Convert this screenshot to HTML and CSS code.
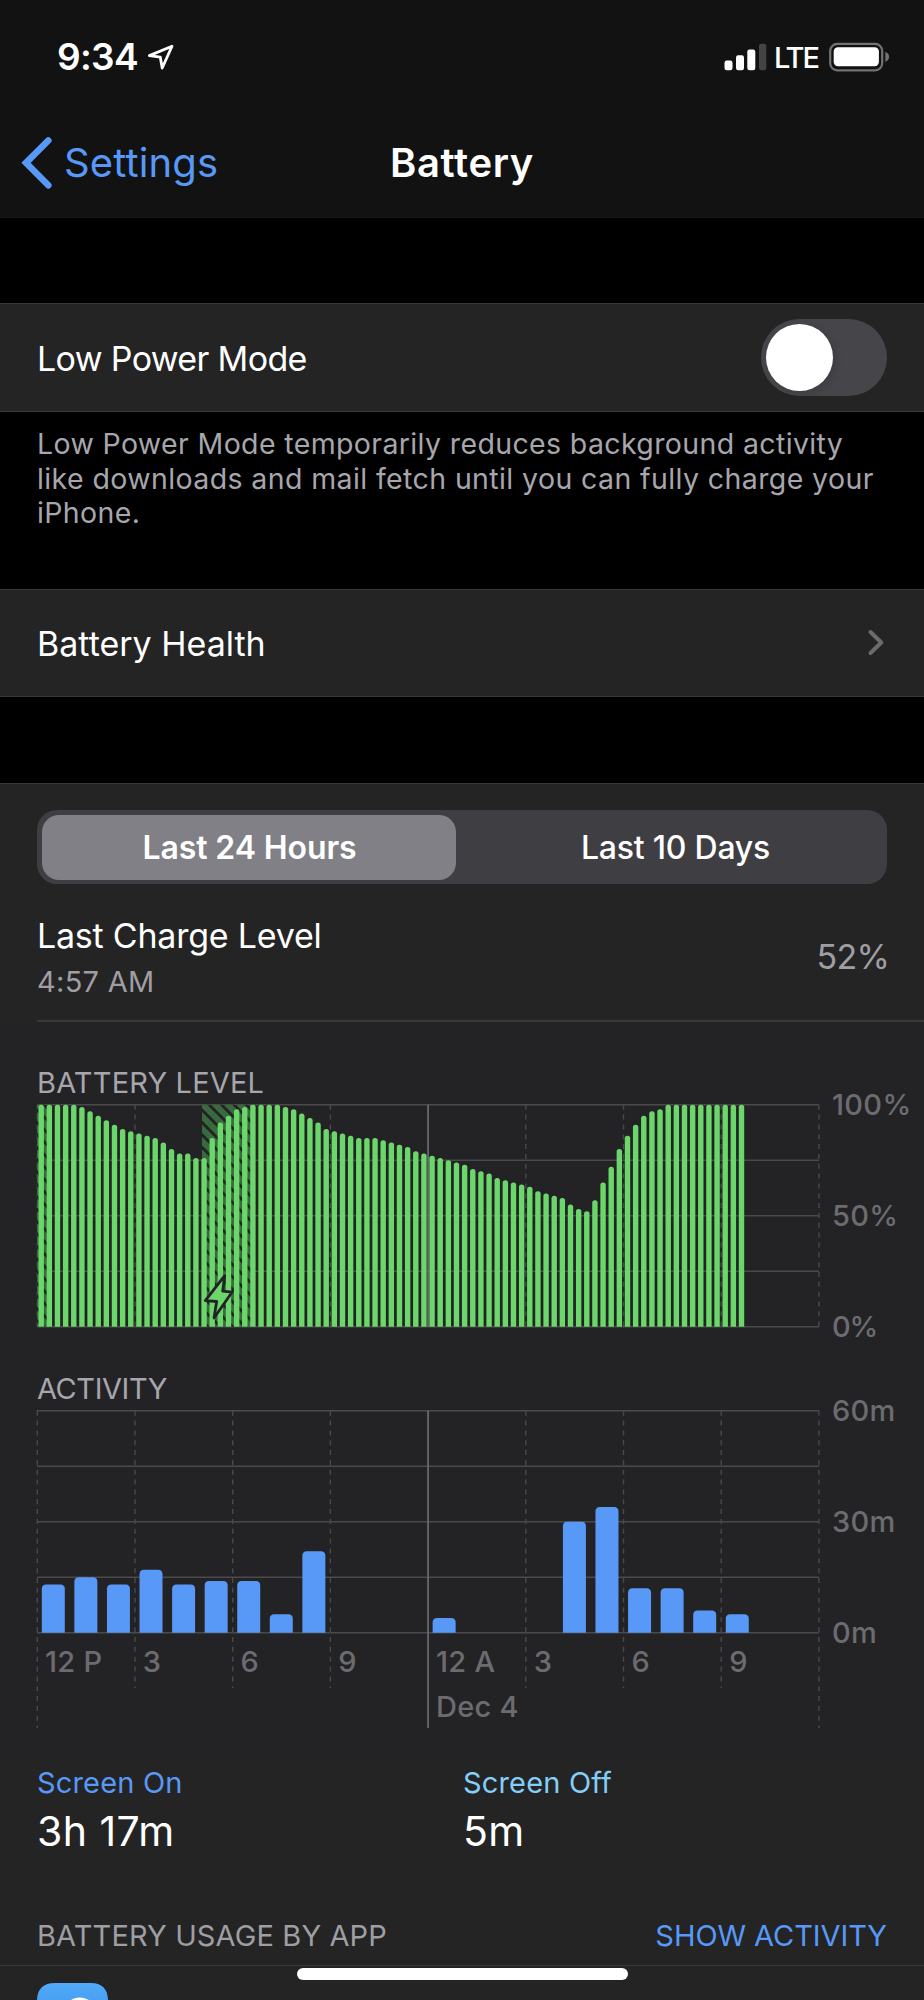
FILE: index.html
```html
<!DOCTYPE html>
<html lang="en">
<head>
<meta charset="utf-8">
<title>Battery</title>
<link rel="stylesheet" href="styles.css">
</head>
<body>
<main class="phone">
  <header class="top">
    <div class="status">
      <span class="clock">9:34</span>
      <svg class="location" width="28" height="28" viewBox="0 0 28 28"><path d="M25 3.2 2.4 12.6 13.3 14.2 15.2 25z"/></svg>
      <svg class="signal" width="43" height="28" viewBox="0 0 43 28">
        <rect x="0.5" y="17.5" width="8" height="9.8" rx="2.2"/>
        <rect x="12" y="12.3" width="8" height="15" rx="2.2"/>
        <rect x="23.3" y="6.5" width="8" height="20.8" rx="2.2"/>
        <rect class="off" x="35" y="0.7" width="7.3" height="26.6" rx="2.2"/>
      </svg>
      <span class="carrier">LTE</span>
      <svg class="cell" width="62" height="30" viewBox="0 0 62 30">
        <rect class="shell" x="2.2" y="1.9" width="52" height="26.4" rx="7"/>
        <rect class="charge" x="5.7" y="5.3" width="45.2" height="19" rx="4.2"/>
        <path class="tip" d="M57.3 9.8c5 1.8 5 8.4 0 10.2z"/>
      </svg>
    </div>
    <nav class="nav">
      <a class="back"><svg width="32" height="54" viewBox="0 0 32 54"><path d="M28.300 4.5 6 26.800 28.300 49.300"/></svg><span>Settings</span></a>
      <h1 class="title">Battery</h1>
    </nav>
  </header>

  <section class="row row-power">
    <span class="label power-label">Low Power Mode</span>
    <span class="switch"><span class="knob"></span></span>
  </section>
  <p class="note">Low Power Mode temporarily reduces background activity<br><span class="note-wide">like downloads and mail fetch until you can fully charge your</span><br>iPhone.</p>

  <section class="row row-health">
    <span class="label">Battery Health</span>
    <svg class="chevron" width="20" height="30" viewBox="0 0 20 30"><path d="M3.500 4 14.300 14.500 3.500 25"/></svg>
  </section>

  <section class="usage">
    <div class="segments">
      <span class="segment active">Last 24 Hours</span>
      <span class="segment">Last 10 Days</span>
    </div>
    <div class="charge-row">
      <div class="charge-text">
        <span class="label charge-label">Last Charge Level</span>
        <span class="time">4:57 AM</span>
      </div>
      <span class="percent">52%</span>
    </div>

    <div class="charts">
      <h2 class="caption">BATTERY LEVEL</h2>
      <div class="chart">
        <svg id="level" class="plot" width="784" height="224" viewBox="0 0 784 224"></svg>
        <div class="scale"><span>100%</span><span>50%</span><span class="zero">0%</span></div>
      </div>
      <h2 class="caption caption-activity">ACTIVITY</h2>
      <div class="chart">
        <svg id="activity" class="plot" width="784" height="224" viewBox="0 0 784 224"></svg>
        <div class="scale"><span>60m</span><span>30m</span><span>0m</span></div>
      </div>
      <div class="hours">
        <span>12 P</span><span>3</span><span>6</span><span>9</span><span>12 A<br>Dec 4</span><span>3</span><span>6</span><span>9</span>
      </div>
    </div>

    <div class="totals">
      <div><div class="kind on">Screen On</div><div class="amount">3h 17m</div></div>
      <div><div class="kind off">Screen Off</div><div class="amount">5m</div></div>
    </div>
    <div class="apps-head"><span>BATTERY USAGE BY APP</span><a class="show">SHOW ACTIVITY</a></div>
    <div class="apps">
      <svg class="app-icon" width="72" height="18" viewBox="0 0 72 18">
        <defs><linearGradient id="sky" x1="0" y1="0" x2="0" y2="1"><stop offset="0" stop-color="#50aaf9"/><stop offset="1" stop-color="#4a9ff3"/></linearGradient></defs>
        <path fill="url(#sky)" d="M0 18C0 6 6 0 18 0H54C65 0 71 6 71 18z"/>
        <path fill="#fff" d="M33 18C37 13.200 48 13.200 53 18z"/>
      </svg>
    </div>
  </section>
  <div class="home"></div>
</main>
<script src="charts.js"></script>
</body>
</html>
```
FILE: styles.css
```css
* { box-sizing: border-box; }
body { margin: 0; background: #000; }
.phone {
  position: relative;
  width: 924px;
  height: 2000px;
  overflow: hidden;
  background: #000;
  color: #fff;
  font-family: "Inter", "Liberation Sans", sans-serif;
}
svg { display: block; flex: none; overflow: visible; }
.top {
  height: 218px;
  padding-top: 42px;
  background: #121212;
  border-bottom: 1px solid #191919;
}
.status { display: flex; align-items: center; height: 30px; padding-left: 57px; }
.clock { width: 90px; font-size: 37px; font-weight: 600; line-height: 30px; letter-spacing: -0.67px; }
.location { fill: none; stroke: #fff; stroke-width: 2.8; stroke-linejoin: round; }
.signal { margin-left: 549px; fill: #fff; }
.signal .off { fill: #444; }
.carrier { width: 55px; padding: 2px 0 0 7px; font-size: 29px; font-weight: 500; line-height: 30px; letter-spacing: -2.1px; }
.cell { margin-left: 6px; }
.shell { fill: none; stroke: #727272; stroke-width: 2.2; }
.charge { fill: #fff; }
.tip { fill: #727272; }
.nav { display: grid; grid-template-columns: 1fr auto 1fr; align-items: center; margin-top: 61px; height: 60px; padding: 0 20px; }
.back { display: flex; align-items: center; color: #5899f8; font-size: 40px; letter-spacing: 0.14px; line-height: 48px; }
.back svg { margin-right: 12px; fill: none; stroke: #5899f8; stroke-width: 6.6; stroke-linecap: round; stroke-linejoin: miter; }
.title { margin: 0; font-size: 40px; font-weight: 600; letter-spacing: 0.6px; line-height: 48px; }

.row {
  display: flex;
  align-items: center;
  justify-content: space-between;
  padding: 0 37px;
  background: #242424;
  border: solid #3a3a3b;
  border-width: 1px 0;
}
.row-power { height: 109px; margin-top: 85px; }
.row-health { height: 108px; }
.label { font-size: 34px; line-height: 42px; }
.row .label { padding-top: 2px; }
.power-label { letter-spacing: -0.65px; }
.switch { width: 126px; height: 77px; padding: 5px; border-radius: 39px; background: #464549; }
.knob { display: block; width: 67px; height: 67px; border-radius: 50%; background: #fff; box-shadow: 3px 3px 9px rgba(0, 0, 0, 0.12); }
.note {
  height: 177px;
  margin: 0;
  padding: 15px 37px 0;
  color: #a7a6ad;
  font-size: 28.5px;
  line-height: 34.6px;
  letter-spacing: 0.37px;
  white-space: nowrap;
}
.note-wide { letter-spacing: 0.395px; }
.chevron { fill: none; stroke: #6b6b6f; stroke-width: 4; stroke-linecap: round; stroke-linejoin: round; }

.usage { height: 1217px; margin-top: 86px; background: #242424; border-top: 1px solid #3a3a3b; }
.segments {
  display: grid;
  grid-template-columns: 414px 1fr;
  height: 74px;
  margin: 26px 37px 0;
  padding: 5px;
  border-radius: 20px;
  background: #3f3e43;
}
.segment { padding-left: 13px; font-size: 32px; font-weight: 500; line-height: 65px; text-align: center; letter-spacing: -0.23px; }
.segment.active { padding-left: 1px; border-radius: 17px; background: #808086; font-weight: 600; letter-spacing: -0.11px; }
.charge-row {
  display: flex;
  align-items: center;
  justify-content: space-between;
  height: 138px;
  margin-left: 37px;
  padding-right: 35px;
  border-bottom: 2px solid #38383a;
}
.charge-text { display: flex; flex-direction: column; margin-top: 10px; }
.charge-label { letter-spacing: -0.225px; }
.time { margin-top: 7px; color: #9f9ea3; font-size: 29px; line-height: 36px; letter-spacing: 0.28px; }
.percent { margin-top: 10px; color: #9f9ea3; font-size: 34px; line-height: 42px; letter-spacing: -0.8px; }

.charts { height: 738px; padding: 43px 0 0 37px; background: #232325; }
.caption { margin: 0; color: #a7a6ad; font-size: 29px; font-weight: 400; line-height: 36px; letter-spacing: 0.17px; }
.caption-activity { margin-top: 43px; letter-spacing: -0.42px; }
.chart { display: flex; margin-top: 3px; height: 224px; }
.scale {
  display: flex;
  flex-direction: column;
  justify-content: space-between;
  height: 252px;
  margin: -14px 0 0 11px;
  color: #6c6c70;
  font-size: 29px;
  font-weight: 500;
  line-height: 30px;
  letter-spacing: 0.3px;
}
.zero { letter-spacing: -1.2px; }
.hours {
  display: grid;
  grid-template-columns: repeat(8, 97.75px);
  margin-top: 5px;
  color: #6c6c70;
  font-size: 29px;
  font-weight: 500;
  line-height: 45px;
  letter-spacing: 0.25px;
  white-space: nowrap;
}
.hours span { padding-left: 8px; }
.plot .grid { stroke: #4a4a4c; stroke-width: 1.4; }
.plot .dash { stroke: #49494b; stroke-width: 1.4; stroke-dasharray: 5 4.84; }
.plot .day { stroke: #68686b; stroke-width: 1.8; }
.plot .green { fill: #6bd76a; }
.plot .blue { fill: #5899f8; }
.plot .hatch-bg { fill: #386a3e; }
.plot .hatch-line { stroke: #232325; stroke-width: 2.8; }
.plot .bolt { fill: #6bd76a; stroke: #232325; stroke-width: 2.8; stroke-linejoin: round; }

.totals { display: grid; grid-template-columns: 426px 1fr; height: 136px; padding: 5px 37px 0; }
.kind { font-size: 29px; line-height: 36px; letter-spacing: 0.17px; }
.kind.on { color: #5899f8; }
.kind.off { color: #83cff8; }
.amount { margin-top: 6px; font-size: 41px; line-height: 48px; letter-spacing: 0.45px; }
.apps-head {
  display: flex;
  justify-content: space-between;
  height: 69px;
  padding: 22px 37px 0;
  color: #9f9ea3;
  font-size: 29px;
  line-height: 36px;
  letter-spacing: 0.12px;
}
.show { color: #5899f8; letter-spacing: -0.07px; }
.apps { padding: 17px 0 0 37px; border-top: 1px solid #38383a; }
.home { position: absolute; left: 297px; top: 1968px; width: 331px; height: 12px; border-radius: 6px; background: #fff; }
```
FILE: charts.js
```js
// Both plots share a 782px wide, 24-hour axis with a gridline every 3 hours.
const WIDTH = 782, HEIGHT = 222, TOP = 0.7;

function shape(svg, name, attrs) {
  const node = document.createElementNS('http://www.w3.org/2000/svg', name);
  for (const key in attrs) node.setAttribute(key, attrs[key]);
  svg.appendChild(node);
  return node;
}

function grid(svg, isActivity) {
  for (let i = 0; i <= 4; i++) {
    const y = TOP + i * HEIGHT / 4;
    shape(svg, 'line', { class: 'grid', x1: 0, x2: WIDTH, y1: y, y2: y });
  }
  for (let i = 0; i <= 8; i++) {
    const x = 0.3 + i * 97.7;
    const end = !isActivity ? TOP + HEIGHT : i % 4 === 0 ? 318 : 278;
    shape(svg, 'line', { class: i === 4 ? 'day' : 'dash', x1: x, x2: x, y1: TOP, y2: end });
  }
}

function bar(svg, cls, x, width, height, r) {
  const bottom = TOP + HEIGHT, top = bottom - height;
  shape(svg, 'path', {
    class: cls,
    d: `M${x} ${bottom}V${top + r}Q${x} ${top} ${x + r} ${top}H${x + width - r}Q${x + width} ${top} ${x + width} ${top + r}V${bottom}z`
  });
}

const level = document.getElementById('level');
grid(level, false);

// Charging periods, as [left, right] in plot pixels.
[[0, 11], [165, 215]].forEach(([left, right], i) => {
  const clip = shape(level, 'clipPath', { id: 'charging' + i });
  shape(clip, 'rect', { x: left, y: TOP, width: right - left, height: HEIGHT });
  const group = shape(level, 'g', { 'clip-path': `url(#charging${i})` });
  shape(group, 'rect', { class: 'hatch-bg', x: left, y: TOP, width: right - left, height: HEIGHT });
  for (let y = -60; y < HEIGHT; y += 12.4) {
    shape(group, 'line', { class: 'hatch-line', x1: left - 4, y1: y, x2: left + 60, y2: y + 64 });
  }
});

const levels = [
  100, 100, 100, 100, 100, 99, 97, 95, 93, 91, 89, 88, 87, 86, 85, 83, 80, 78, 78, 76, 76,
  85, 92, 95, 98, 99, 100, 100, 100, 100, 99, 98, 96, 94, 92, 89, 88, 87, 86, 85, 85, 85,
  84, 83, 82, 81, 79, 78, 77, 76, 75, 74, 73, 71, 70, 69, 67, 66, 65, 64, 63, 61, 60, 59,
  58, 55, 53, 52, 57, 65, 72, 80, 86, 91, 95, 97, 98, 100, 100, 100, 100, 100, 100, 100,
  100, 100, 100
];
levels.forEach((value, i) => bar(level, 'green', 1.5 + i * 8.143, 5.4, value * HEIGHT / 100, 2.5));
shape(level, 'path', { class: 'bolt', d: 'M187.700 171.700 168.300 196.700 179.700 197.500 177 214 195 188.200 185.700 187.200z' });

const activity = document.getElementById('activity');
grid(activity, true);
const minutes = [13, 15, 13, 17, 13, 14, 14, 5, 22, 0, 0, 0, 4, 0, 0, 0, 30, 34, 12, 12, 6, 5];
minutes.forEach((value, i) => {
  if (value) bar(activity, 'blue', 4.8 + i * 32.57, 23, value * HEIGHT / 60, 4.5);
});
```
